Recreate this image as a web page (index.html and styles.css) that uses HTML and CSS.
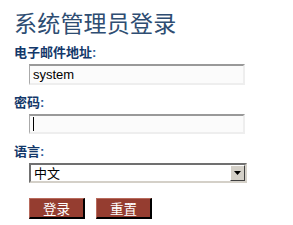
FILE: index.html
```html
<!DOCTYPE html>
<html lang="zh">
<head>
<meta charset="utf-8">
<title>系统管理员登录</title>
<link rel="stylesheet" href="styles.css">
</head>
<body>
<div class="page">
  <h1 class="title">系统管理员登录</h1>
  <form class="form">
    <label class="label" for="email">电子邮件地址<span class="colon">:</span></label>
    <input class="field" id="email" type="text" value="system">
    <label class="label label-gap" for="pw">密码<span class="colon">:</span></label>
    <div class="field field-pw"><span class="caret"></span></div>
    <label class="label label-gap" for="lang">语言<span class="colon">:</span></label>
    <div class="select">
      <span class="select-text">中文</span>
      <span class="select-btn"><svg width="7" height="4" viewBox="0 0 7 4"><path d="M0 0h7L3.5 4z" fill="#000"/></svg></span>
    </div>
    <div class="buttons">
      <button type="button" class="btn">登录</button>
      <button type="button" class="btn">重置</button>
    </div>
  </form>
</div>
</body>
</html>
```
FILE: styles.css
```css
html, body {
  margin: 0;
  padding: 0;
  background: #fff;
}
.page {
  padding: 7px 0 0 14px;
  font-family: "Noto Sans CJK SC", "Liberation Sans", sans-serif;
}
.title {
  margin: 0;
  font-size: 23px;
  line-height: 30px;
  font-weight: normal;
  color: #2e4d72;
  letter-spacing: 0.2px;
}
.form {
  display: flex;
  flex-direction: column;
  align-items: flex-start;
  margin-top: 7px;
}
.label {
  font-size: 13px;
  line-height: 16px;
  font-weight: bold;
  color: #13386a;
  margin-bottom: 3px;
}
.colon {
  font-family: "Liberation Sans", sans-serif;
  color: #2a5a9a;
}
.label-gap {
  margin-top: 9px;
}
.field {
  box-sizing: border-box;
  margin-left: 15px;
  width: 216px;
  height: 21px;
  border-style: solid;
  border-width: 2px 2px 2px 1px;
  border-color: #999 #eee #eee #aaa;
  background: #fbfbfb;
  font-family: "Liberation Sans", sans-serif;
  font-size: 13px;
  padding: 0 3px;
  color: #000;
  outline: none;
}
.field-pw {
  height: 20px;
  display: flex;
  align-items: center;
}
.caret {
  display: block;
  width: 1px;
  height: 14px;
  background: #000;
}
.select {
  box-sizing: border-box;
  margin-left: 15px;
  width: 218px;
  height: 20px;
  position: relative;
  display: flex;
  align-items: center;
  border-style: solid;
  border-width: 2px;
  border-color: #707070 #d4d0c8 #d4d0c8 #707070;
  background: #fff;
  font-size: 13px;
  color: #000;
  padding-left: 3px;
}
.select-text {
  line-height: 16px;
}
.select-btn {
  position: absolute;
  right: 0;
  top: 0;
  bottom: 0;
  width: 15px;
  box-sizing: border-box;
  background: #d4d0c8;
  border-style: solid;
  border-width: 1px;
  border-color: #fff #404040 #404040 #fff;
  display: flex;
  align-items: center;
  justify-content: center;
}
.buttons {
  display: flex;
  gap: 11px;
  margin: 15px 0 0 15px;
}
.btn {
  box-sizing: border-box;
  width: 56px;
  height: 21px;
  padding: 0;
  background: #953d30;
  color: #fff;
  font-family: "Noto Sans CJK SC", sans-serif;
  font-size: 13.5px;
  line-height: 16px;
  border-style: solid;
  border-width: 1px 2px 2px 1px;
  border-color: #b86a5c #000 #000 #b86a5c;
  cursor: pointer;
}
```
